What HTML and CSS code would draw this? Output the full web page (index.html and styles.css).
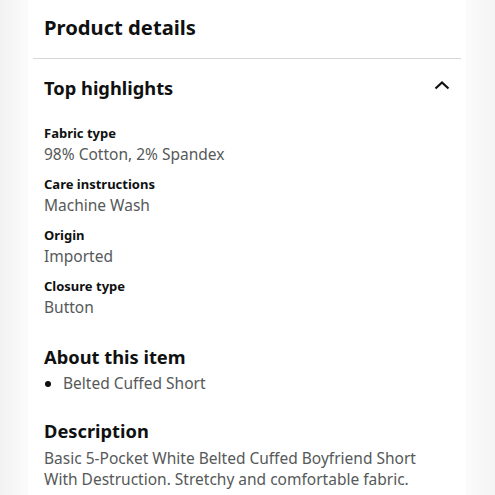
FILE: index.html
```html
<!DOCTYPE html>
<html>
<head>
<meta charset="utf-8">
<link rel="stylesheet" href="styles.css">
</head>
<body>
<div class="page">
  <div class="card">
    <h1 class="title">Product details</h1>
    <div class="divider"></div>
    <div class="section-head">
      <h2 class="h2">Top highlights</h2>
      <svg class="chev" width="16" height="10" viewBox="0 0 16 10"><path d="M1.5 8.5 L8 2.5 L14.5 8.5" fill="none" stroke="#0f1111" stroke-width="2.2"/></svg>
    </div>
    <div class="attrs">
      <div class="attr"><div class="label">Fabric type</div><div class="value">98% Cotton, 2% Spandex</div></div>
      <div class="attr"><div class="label">Care instructions</div><div class="value">Machine Wash</div></div>
      <div class="attr"><div class="label">Origin</div><div class="value">Imported</div></div>
      <div class="attr"><div class="label">Closure type</div><div class="value">Button</div></div>
    </div>
    <h2 class="h2 about">About this item</h2>
    <ul class="bullets"><li>Belted Cuffed Short</li></ul>
    <h2 class="h2 desc-h">Description</h2>
    <p class="desc">Basic 5-Pocket White Belted Cuffed Boyfriend Short<br>With Destruction. Stretchy and comfortable fabric.</p>
  </div>
</div>
</body>
</html>
```
FILE: styles.css
```css
html, body { margin: 0; padding: 0; }
body {
  background: linear-gradient(90deg, #f2f2f2 0, #fbfbfb 28px, #fbfbfb 466px, #f4f4f4 495px);
  font-family: "Noto Sans", sans-serif;
  color: #0f1111;
  width: 495px;
  height: 495px;
  overflow: hidden;
}
.page { padding-left: 28px; width: 438px; }
.card { background: #fff; padding: 0 16px 20px 16px; height: 495px; box-sizing: border-box; }
.title { margin: 0; padding-top: 10px; font-size: 20.2px; font-weight: 700; line-height: 34px; }
.divider { height: 1px; background: #d5d9d9; margin: 14px -11px 0 -11px; }
.section-head { display: flex; justify-content: space-between; align-items: center; padding-top: 16px; padding-right: 0; }
.h2 { margin: 0; font-size: 18.3px; font-weight: 700; line-height: 26px; }
.chev { margin-top: -6px; }
.attrs { padding-top: 22px; }
.attr { margin-bottom: 9px; }
.label { font-size: 13px; font-weight: 700; line-height: 20px; }
.value { font-size: 15.5px; color: #565959; line-height: 22px; }
.about { margin-top: 26px; }
.bullets { margin: 0; padding-left: 19px; font-size: 15.5px; color: #565959; line-height: 26px; }
.bullets li::marker { color: #0f1111; }
.desc-h { margin-top: 22px; }
.desc { margin: 4px 0 0; font-size: 15.5px; color: #565959; line-height: 21px; }
```
